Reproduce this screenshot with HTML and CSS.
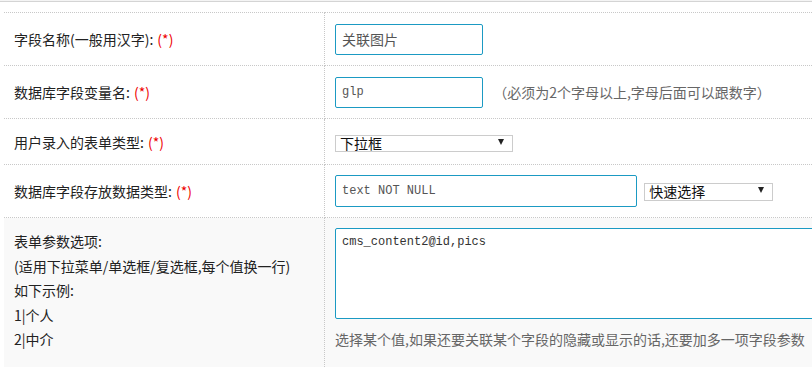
FILE: index.html
```html
<!DOCTYPE html>
<html lang="zh-CN">
<head>
  <meta charset="UTF-8" />
  <meta name="viewport" content="width=device-width, initial-scale=1.0" />
  <title>字段设置</title>
  <link rel="stylesheet" href="styles.css">
</head>
<body>
  <div class="topbar"></div>

  <table class="form-table">
    <tr class="row-normal">
      <td class="label">字段名称(一般用汉字):<span class="req">(*)</span></td>
      <td class="field">
        <input class="txt txt-short" value="关联图片" />
      </td>
    </tr>
    <tr class="row-normal">
      <td class="label">数据库字段变量名:<span class="req">(*)</span></td>
      <td class="field">
        <input class="txt txt-short mono" value="glp" />
        <span class="tip">（必须为2个字母以上,字母后面可以跟数字）</span>
      </td>
    </tr>
    <tr class="row-small">
      <td class="label">用户录入的表单类型:<span class="req">(*)</span></td>
      <td class="field">
        <span class="sel sel-type">
          <select>
            <option>下拉框</option>
          </select>
        </span>
      </td>
    </tr>
    <tr class="row-normal">
      <td class="label">数据库字段存放数据类型:<span class="req">(*)</span></td>
      <td class="field">
        <input class="txt txt-long mono" value="text NOT NULL" />
        <span class="sel sel-quick">
          <select>
            <option>快速选择</option>
          </select>
        </span>
      </td>
    </tr>
    <tr class="row-big">
      <td class="label label-multi">
        <div>表单参数选项:</div>
        <div>(适用下拉菜单/单选框/复选框,每个值换一行)</div>
        <div>如下示例:</div>
        <div>1|个人</div>
        <div>2|中介</div>
      </td>
      <td class="field field-top">
        <textarea class="area mono">cms_content2@id,pics</textarea>
        <div class="tip tip-below">选择某个值,如果还要关联某个字段的隐藏或显示的话,还要加多一项字段参数</div>
      </td>
    </tr>
  </table>
</body>
</html>
```

FILE: styles.css
```css
html, body {
  margin: 0;
  overflow: hidden;
}

body {
  font-family: "Noto Sans CJK SC", "Noto Sans", sans-serif;
  font-size: 14px;
  color: #222;
  background: #fff;
}

.topbar {
  height: 1px;
  background: #f4f4f4;
  border-bottom: 1px solid #d4d4d4;
  margin-bottom: 10px;
}

.form-table {
  border-collapse: collapse;
  margin-left: 4px;
  width: 1000px;
  table-layout: fixed;
}

.form-table td {
  border-top: 1px dotted #c8c8c8;
  border-bottom: 1px dotted #c8c8c8;
  padding: 0;
  vertical-align: middle;
}

.form-table td.label {
  width: 310px;
  padding-left: 10px;
  border-right: 1px dotted #c8c8c8;
  white-space: nowrap;
}

.form-table td.field {
  padding-left: 10px;
  white-space: nowrap;
}

.row-normal td {
  height: 52px;
}

.row-small td {
  height: 45px;
}

.row-big td {
  height: 145px;
  background: #f9f9f9;
}

.req {
  color: #e00;
  margin-left: 4px;
}

.label-multi {
  vertical-align: top !important;
  padding-top: 11px !important;
  line-height: 24.5px;
}

.field-top {
  vertical-align: top !important;
  padding-top: 10px !important;
}

.txt {
  box-sizing: border-box;
  height: 31px;
  border: 1px solid #1b9ac3;
  border-radius: 2px;
  padding: 0 6px;
  font-family: "Noto Sans CJK SC", sans-serif;
  font-size: 14px;
  color: #555;
  vertical-align: middle;
  outline: none;
}

.txt-short {
  width: 148px;
}

.txt-long {
  width: 302px;
  height: 32px;
}

.mono {
  font-family: "Liberation Mono", "Noto Sans CJK SC", monospace;
  font-size: 12px;
}

.tip {
  color: #666;
  margin-left: 7px;
  vertical-align: middle;
}

.tip-below {
  margin: 10px 0 0 0;
}

.sel {
  position: relative;
  display: inline-block;
  vertical-align: middle;
}

.sel select {
  appearance: none;
  -webkit-appearance: none;
  box-sizing: border-box;
  border: 1px solid #ccc;
  border-radius: 0;
  background: #fff;
  padding: 0 0 0 4px;
  margin: 0;
  font-family: "Noto Sans CJK SC", sans-serif;
  font-size: 14px;
  line-height: 15px;
  color: #111;
  outline: none;
}

.sel::after {
  content: "";
  position: absolute;
  right: 9px;
  top: 6px;
  border-left: 3px solid transparent;
  border-right: 3px solid transparent;
  border-top: 6px solid #222;
  pointer-events: none;
}

.sel-type select {
  width: 178px;
  height: 17px;
}

.sel-quick {
  margin-left: 4px;
}

.sel-quick select {
  width: 129px;
  height: 18px;
}

.area {
  display: block;
  box-sizing: border-box;
  width: 620px;
  height: 91px;
  border: 1px solid #1b9ac3;
  border-radius: 2px;
  padding: 6px 6px;
  resize: none;
  color: #333;
  outline: none;
  background: #fff;
}
```
